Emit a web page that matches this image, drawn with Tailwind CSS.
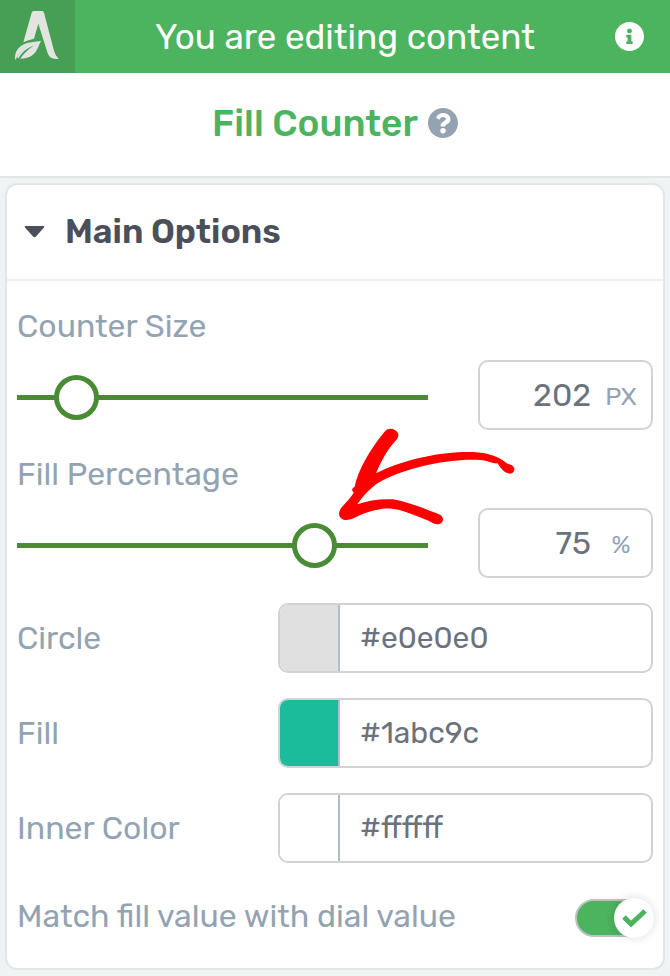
<!DOCTYPE html>
<html lang="en">
<head>
    <meta charset="UTF-8">
    <meta name="viewport" content="width=device-width, initial-scale=1.0">
    <title>Fill Counter - Options</title>
    <script src="https://cdn.jsdelivr.net/npm/@tailwindcss/browser@4"></script>
</head>
<body class="min-h-screen bg-[#f0f3f3] font-['Rubik','Roboto',sans-serif] text-[32px] leading-10 text-[#94a3b2]">
    <!-- Top bar -->
    <header class="flex h-[73px] items-center bg-[#4cb35e] text-white">
        <a href="#" aria-label="Home" class="flex h-full w-[75px] shrink-0 items-center bg-[#469f54]">
            <svg class="h-[73px] w-[75px]" viewBox="0 0 225 219" fill="#e2e4e2">
                <path d="M101 33H127Q131 33 132 38L162 152Q166 168 176 176Q150 180 143 160L115 71L102 116Q86 119 70 127L95 38Q97 33 101 33Z"/>
                <path d="M46 181C42 160 52 143 69 134C86 125 105 126 124 122L119 126C85 132 60 148 46 181Z"/>
                <path d="M124 124C112 135 115 176 61 176C68 163 83 149 101 137C79 145 65 157 56 174C51 176 51 172 54 166C66 143 93 128 124 124Z"/>
            </svg>
        </a>
        <h1 class="flex-1 text-center text-[35px]">You are editing content</h1>
        <button type="button" aria-label="Info" class="mr-[26px]">
            <svg class="size-[29px]" viewBox="8 8 496 496" fill="currentColor"><path d="M256 8C119.043 8 8 119.083 8 256c0 136.997 111.043 248 248 248s248-111.003 248-248C504 119.083 392.957 8 256 8zm0 110c23.196 0 42 18.804 42 42s-18.804 42-42 42-42-18.804-42-42 18.804-42 42-42zm56 254c0 6.627-5.373 12-12 12h-88c-6.627 0-12-5.373-12-12v-24c0-6.627 5.373-12 12-12h12v-64h-12c-6.627 0-12-5.373-12-12v-24c0-6.627 5.373-12 12-12h64c6.627 0 12 5.373 12 12v100h12c6.627 0 12 5.373 12 12v24z"/></svg>
        </button>
    </header>

    <!-- Element title -->
    <div class="flex h-[105px] items-center justify-center gap-[10px] border-b-2 border-[#e2e6e6] bg-white pb-1">
        <h2 class="text-[37px] font-medium text-[#4cb35e]">Fill Counter</h2>
        <button type="button" aria-label="Help">
            <svg class="size-[30px]" viewBox="8 8 496 496" fill="currentColor"><path d="M504 256c0 136.997-111.043 248-248 248S8 392.997 8 256C8 119.083 119.043 8 256 8s248 111.083 248 248zM262.655 90c-54.497 0-89.255 22.957-116.549 63.758-3.536 5.286-2.353 12.415 2.715 16.258l34.699 26.31c5.205 3.947 12.621 3.008 16.665-2.122 17.864-22.658 30.113-35.797 57.303-35.797 20.429 0 45.698 13.148 45.698 32.958 0 14.976-12.363 22.667-32.534 33.976C247.128 238.528 216 254.941 216 296v4c0 6.627 5.373 12 12 12h56c6.627 0 12-5.373 12-12v-1.333c0-28.462 83.186-29.647 83.186-106.667 0-58.002-60.165-102-116.531-102zM256 338c-25.365 0-46 20.635-46 46 0 25.364 20.635 46 46 46s46-20.636 46-46c0-25.364-20.635-46-46-46z"/></svg>
        </button>
    </div>

    <!-- Main options -->
    <section class="mx-[5px] mt-[5px] rounded-xl border-2 border-[#e2e6e6] bg-white">
        <h3 class="border-b-2 border-[#eaeeee]">
            <button type="button" aria-expanded="true" class="flex h-[94px] w-full items-center gap-5 px-[17px] text-[34px] font-semibold text-[#4b4f5a]">
                <svg class="h-3 w-[21px]" viewBox="0 0 21 12" fill="currentColor"><path d="M1.500 0H19.500Q21 0 20 1.500L12 10.500Q10.500 12 9 10.500L1 1.500Q0 0 1.500 0Z"/></svg>
                Main Options
            </button>
        </h3>

        <div class="flex flex-col gap-[25px] px-[10px] pt-[25px] pb-5">
            <div class="flex flex-col gap-6">
                <div class="flex flex-col gap-[14px]">
                    <label for="size">Counter Size</label>
                    <div class="flex items-center gap-[50px]">
                        <input id="size-range" aria-label="Counter size slider" type="range" min="50" max="1550" value="202" class="h-[45px] min-w-0 flex-1 appearance-none bg-transparent pt-1 [&::-webkit-slider-runnable-track]:h-[5px] [&::-webkit-slider-runnable-track]:bg-[#4a8b35] [&::-webkit-slider-thumb]:-mt-5 [&::-webkit-slider-thumb]:size-[45px] [&::-webkit-slider-thumb]:appearance-none [&::-webkit-slider-thumb]:rounded-full [&::-webkit-slider-thumb]:border-[5px] [&::-webkit-slider-thumb]:border-[#4a8b35] [&::-webkit-slider-thumb]:bg-white">
                        <div class="flex h-[70px] w-[175px] items-center rounded-[10px] border-2 border-[#d0d2d4] pr-[10px]">
                            <input id="size" type="text" value="202" class="min-w-0 flex-1 pr-[10px] text-right text-[#6b727c]">
                            <span class="w-10 pt-1 text-center text-[25px]">PX</span>
                        </div>
                    </div>
                </div>

                <div class="relative flex flex-col gap-[14px]">
                    <label for="percent">Fill Percentage</label>
                    <div class="flex items-center gap-[50px]">
                        <input id="percent-range" aria-label="Fill percentage slider" type="range" min="0" max="100" value="75" class="h-[45px] min-w-0 flex-1 appearance-none bg-transparent pt-1 [&::-webkit-slider-runnable-track]:h-[5px] [&::-webkit-slider-runnable-track]:bg-[#4a8b35] [&::-webkit-slider-thumb]:-mt-5 [&::-webkit-slider-thumb]:size-[45px] [&::-webkit-slider-thumb]:appearance-none [&::-webkit-slider-thumb]:rounded-full [&::-webkit-slider-thumb]:border-[5px] [&::-webkit-slider-thumb]:border-[#4a8b35] [&::-webkit-slider-thumb]:bg-white">
                        <div class="flex h-[70px] w-[175px] items-center rounded-[10px] border-2 border-[#d0d2d4] pr-[10px]">
                            <input id="percent" type="text" value="75" class="min-w-0 flex-1 pr-[10px] text-right text-[#6b727c]">
                            <span class="w-10 pt-1 text-center text-[25px]">%</span>
                        </div>
                    </div>
                    <!-- Hand-drawn pointer -->
                    <svg class="pointer-events-none absolute -top-[34px] left-[313px] h-[110px] w-[200px]" viewBox="0 0 600 330" fill="#ff0000">
                        <path d="M165 34C175 22 196 25 204 40C208 50 201 58 194 65C172 90 152 125 138 160C210 122 330 92 430 96C472 98 505 108 530 130L546 136C558 145 554 160 540 161C526 160 514 150 503 130C490 132 475 122 450 120C350 115 230 145 160 180C130 195 105 220 82 253C115 241 150 236 190 238C240 248 290 268 330 284C345 294 340 310 325 313C310 313 300 302 288 299C250 284 215 268 185 266C145 264 110 277 80 290C60 300 45 303 35 296C24 288 25 275 35 262C50 245 68 228 71 217C65 213 64 205 74 200C84 150 120 88 165 34Z"/>
                    </svg>
                </div>
            </div>

            <div class="flex items-center">
                <label for="circle" class="flex-1">Circle</label>
                <div class="flex h-[70px] w-[375px] overflow-hidden rounded-[10px] border-2 border-[#d0d2d4]">
                    <input type="color" aria-label="Circle swatch" value="#e0e0e0" class="h-full w-[60px] appearance-none border-r-2 border-[#b4bcc3] bg-[#e0e0e0] p-0 [&::-webkit-color-swatch-wrapper]:p-0 [&::-webkit-color-swatch]:border-0">
                    <input id="circle" type="text" value="#e0e0e0" class="min-w-0 flex-1 px-5 text-[30px] text-[#6b727c]">
                </div>
            </div>

            <div class="flex items-center">
                <label for="fill" class="flex-1">Fill</label>
                <div class="flex h-[70px] w-[375px] overflow-hidden rounded-[10px] border-2 border-[#d0d2d4]">
                    <input type="color" aria-label="Fill swatch" value="#1abc9c" class="h-full w-[60px] appearance-none border-r-2 border-[#b4bcc3] bg-[#1abc9c] p-0 [&::-webkit-color-swatch-wrapper]:p-0 [&::-webkit-color-swatch]:border-0">
                    <input id="fill" type="text" value="#1abc9c" class="min-w-0 flex-1 px-5 text-[30px] text-[#6b727c]">
                </div>
            </div>

            <div class="flex items-center">
                <label for="inner" class="flex-1">Inner Color</label>
                <div class="flex h-[70px] w-[375px] overflow-hidden rounded-[10px] border-2 border-[#d0d2d4]">
                    <input type="color" aria-label="Inner color swatch" value="#ffffff" class="h-full w-[60px] appearance-none border-r-2 border-[#b4bcc3] bg-white p-0 [&::-webkit-color-swatch-wrapper]:p-0 [&::-webkit-color-swatch]:border-0">
                    <input id="inner" type="text" value="#ffffff" class="min-w-0 flex-1 px-5 text-[30px] text-[#6b727c]">
                </div>
            </div>

            <div class="flex h-[60px] items-center justify-between">
                <label for="match" class="pb-1">Match fill value with dial value</label>
                <div class="relative h-[38px] w-[78px]">
                    <input id="match" type="checkbox" checked class="peer block h-full w-full appearance-none rounded-full border-2 border-[#b9c4bf] bg-[#d5dbdb] checked:bg-[#4cb35e]">
                    <span class="pointer-events-none absolute -top-px left-0 flex size-10 items-center justify-center rounded-full bg-white shadow-[0_0_10px_rgba(0,0,0,0.15)] peer-checked:translate-x-[39px]">
                        <svg class="h-[19px] w-[25px]" viewBox="0 0 25 19" fill="none" stroke="#4cb35e" stroke-width="5"><path d="M2 8L9 15L23 2"/></svg>
                    </span>
                </div>
            </div>
        </div>
    </section>
</body>
</html>
